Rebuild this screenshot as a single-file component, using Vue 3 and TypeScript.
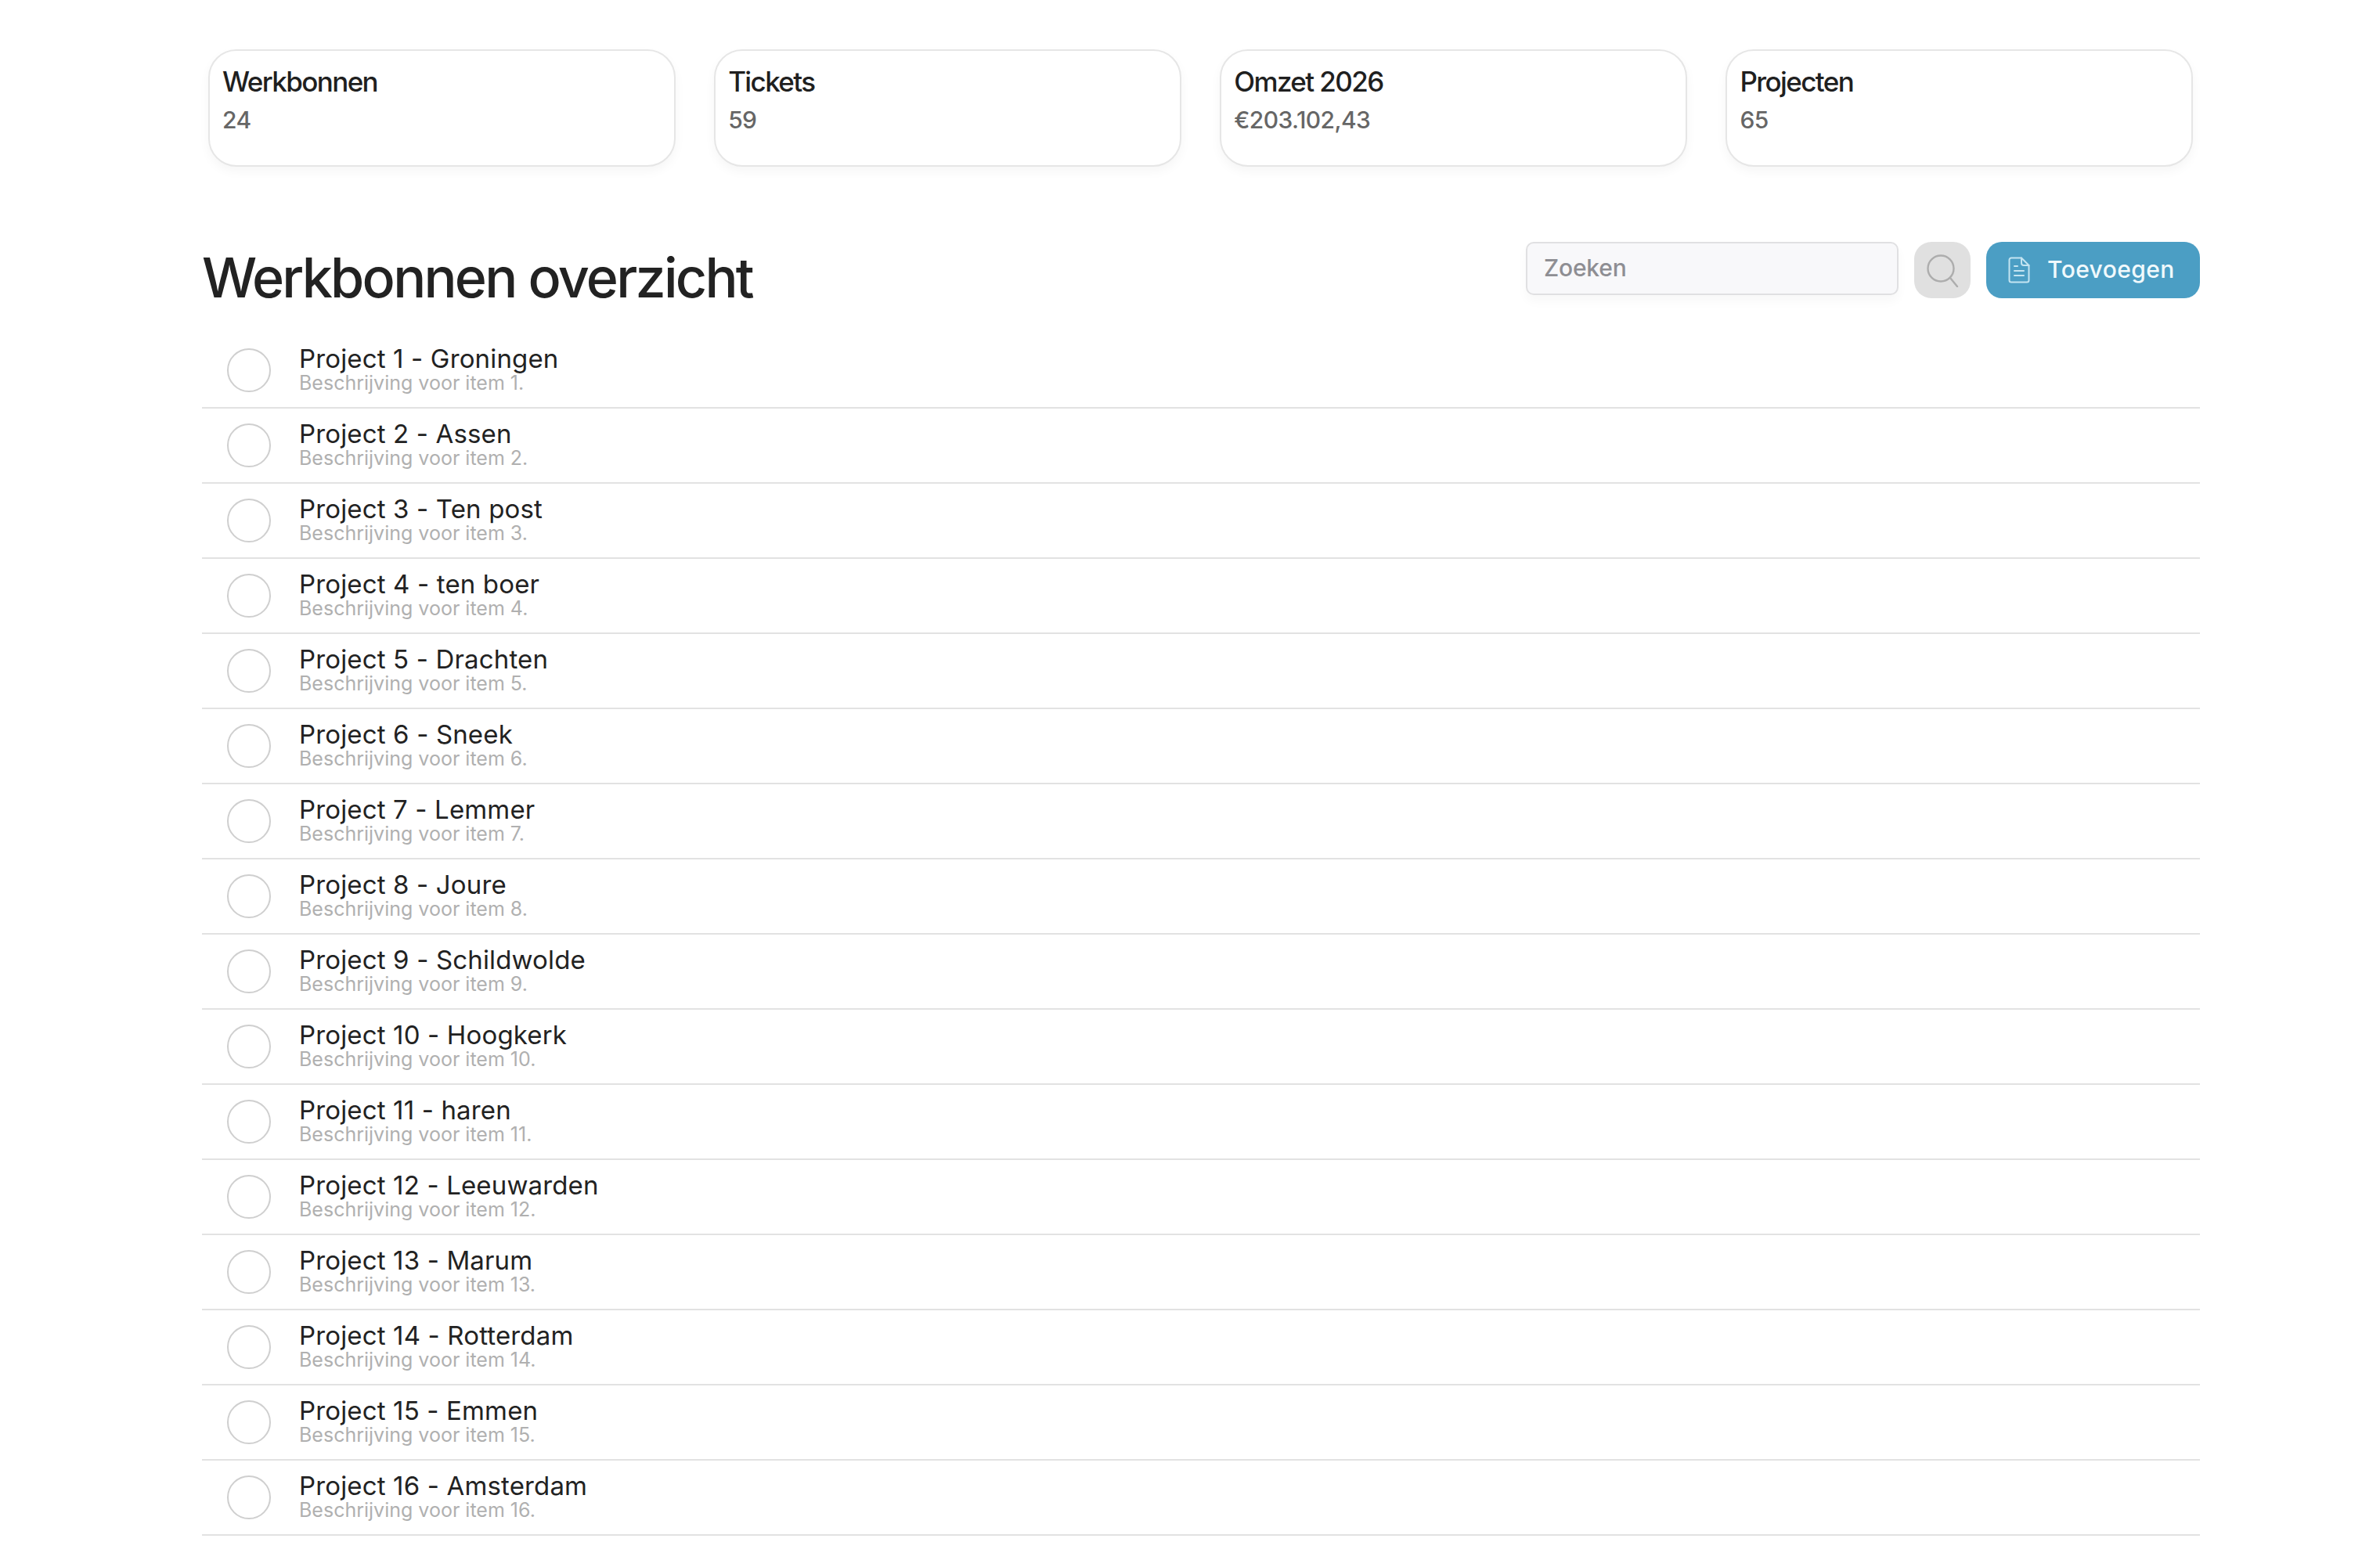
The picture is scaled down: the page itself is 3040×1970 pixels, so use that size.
<script setup lang="ts">
const cards = [
  { title: 'Werkbonnen', value: '24' },
  { title: 'Tickets', value: '59' },
  { title: 'Omzet 2026', value: '€203.102,43' },
  { title: 'Projecten', value: '65' },
]
const places = ['Groningen','Assen','Ten post','ten boer','Drachten','Sneek','Lemmer','Joure','Schildwolde','Hoogkerk','haren','Leeuwarden','Marum','Rotterdam','Emmen','Amsterdam']
const items = places.map((p, i) => ({ title: `Project ${i + 1} - ${p}`, desc: `Beschrijving voor item ${i + 1}.` }))
</script>

<template>
  <div class="page">
    <section class="cards">
      <div v-for="c in cards" :key="c.title" class="card">
        <div class="card-title">{{ c.title }}</div>
        <div class="card-value">{{ c.value }}</div>
      </div>
    </section>
    <header class="head">
      <h1>Werkbonnen overzicht</h1>
      <div class="tools">
        <input class="search" type="text" placeholder="Zoeken" />
        <button class="icon-btn" aria-label="Zoeken">
          <svg width="44" height="44" viewBox="0 0 44 44" fill="none" stroke="#adadad" stroke-width="2.4" stroke-linecap="round">
            <circle cx="20" cy="20" r="16.5" />
            <path d="M32 32l9 11" />
          </svg>
        </button>
        <button class="add-btn">
          <svg width="28" height="34" viewBox="0 0 28 34" fill="none" stroke="#c4e4f1" stroke-width="2" stroke-linecap="round" stroke-linejoin="round">
            <path d="M4 1.5h13l9.500 9.500v19a2.500 2.500 0 0 1-2.500 2.500H4a2.500 2.500 0 0 1-2.500-2.500V4A2.500 2.500 0 0 1 4 1.500z" />
            <path d="M17 1.500V8a3 3 0 0 0 3 3h6.500M8 12h4M8 18h12M8 24h12" />
          </svg>
          <span>Toevoegen</span>
        </button>
      </div>
    </header>
    <ul class="list">
      <li v-for="it in items" :key="it.title" class="row">
        <span class="check"></span>
        <div class="text">
          <div class="row-title">{{ it.title }}</div>
          <div class="row-desc">{{ it.desc }}</div>
        </div>
      </li>
    </ul>
  </div>
</template>

<style>
html, body { margin: 0; background: #fff; }
</style>

<style scoped>
.page {
  width: 2552px;
  margin-left: 258px;
  padding-top: 63px;
  font-family: Inter, "Open Sans", sans-serif;
  color: #222;
}
.cards {
  display: grid;
  grid-template-columns: repeat(4, 1fr);
  gap: 49.5px;
  padding: 0 9px 0 8px;
}
.card {
  height: 150px;
  box-sizing: border-box;
  padding: 18px 16px;
  border: 2px solid #e6e6e6;
  border-radius: 36px;
  background: #fff;
  box-shadow: 0 6px 14px rgba(0, 0, 0, 0.04);
}
.card-title {
  font-size: 35px;
  line-height: 42px;
  font-weight: 500;
  letter-spacing: -1.6px;
  color: #1f1f1f;
}
.card-value {
  margin-top: 8px;
  font-size: 30px;
  line-height: 40px;
  font-weight: 500;
  letter-spacing: -0.6px;
  color: #666;
}
.head {
  display: flex;
  justify-content: space-between;
  align-items: flex-start;
  height: 117px;
  margin-top: 96px;
}
h1 {
  margin: 0;
  font-size: 70px;
  line-height: 92px;
  font-weight: 500;
  letter-spacing: -2.75px;
  color: #222;
}
.tools { display: flex; align-items: flex-start; }
.search {
  width: 476px;
  height: 68px;
  box-sizing: border-box;
  padding: 0 21px 3px;
  border: 2px solid #e0e0e2;
  border-radius: 10px;
  background: #f8f8fa;
  box-shadow: 0 8px 14px rgba(0, 0, 0, 0.03);
  font: 500 30px Inter, sans-serif;
  letter-spacing: -0.2px;
  outline: none;
}
.search::placeholder { color: #8e8e93; opacity: 1; }
.icon-btn {
  width: 72px;
  height: 72px;
  margin-left: 20px;
  padding: 0;
  display: flex;
  align-items: center;
  justify-content: center;
  border: 0;
  border-radius: 22px;
  background: #e0e0e0;
}
.add-btn {
  width: 273px;
  height: 72px;
  margin-left: 20px;
  padding: 0 0 0 28px;
  box-sizing: border-box;
  display: flex;
  align-items: center;
  gap: 22px;
  border: 0;
  border-radius: 20px;
  background: #4b9ec4;
  color: #f0f9fc;
  font: 500 30px Inter, sans-serif;
  letter-spacing: 0.4px;
}
.add-btn span { margin-bottom: 2px; }
.list { list-style: none; margin: 0; padding: 0; }
.row {
  height: 96px;
  box-sizing: border-box;
  display: flex;
  align-items: flex-start;
  border-bottom: 2px solid #e2e2e2;
}
.check {
  width: 56px;
  height: 56px;
  box-sizing: border-box;
  flex: none;
  margin: 19px 36px 0 32px;
  border: 2px solid #cfcfcf;
  border-radius: 50%;
}
.text { padding-top: 14px; }
.row-title {
  font-size: 33px;
  line-height: 36px;
  letter-spacing: 0.15px;
  color: #222;
}
.row-desc {
  font-size: 25px;
  line-height: 26px;
  margin-top: 0;
  color: #b0b0b0;
}
</style>
